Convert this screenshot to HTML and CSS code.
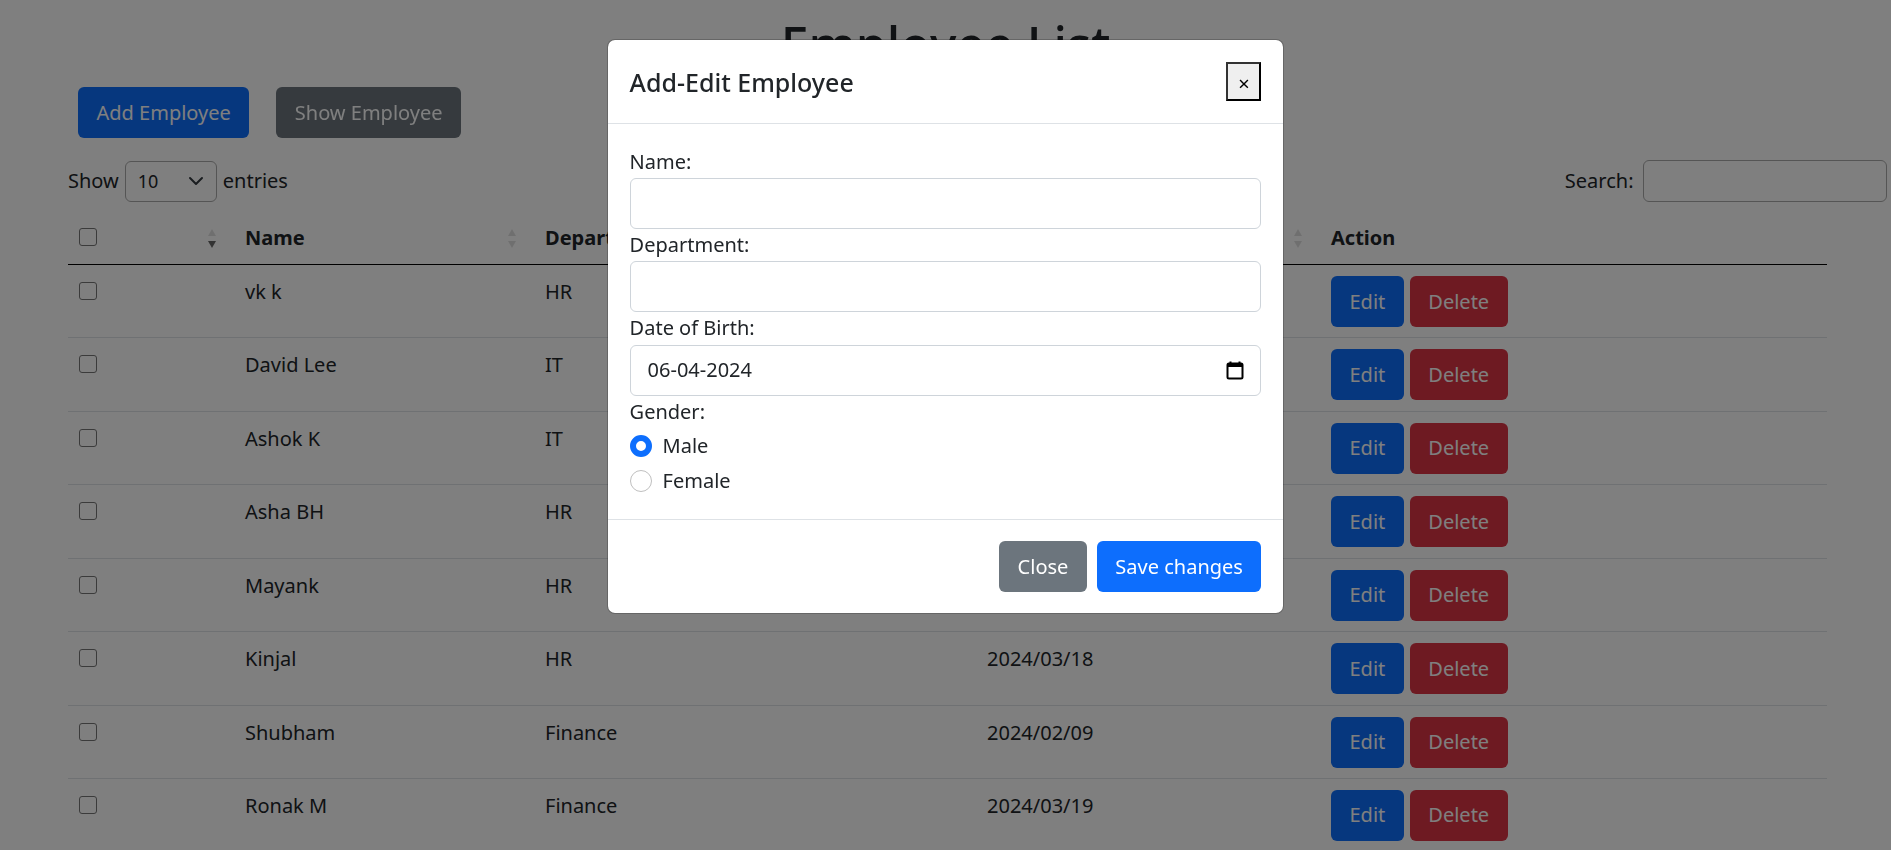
FILE: index.html
```html
<!DOCTYPE html>
<html lang="en">
<head>
  <meta charset="UTF-8" />
  <title>Employee List</title>
  <link rel="stylesheet" href="styles.css">
</head>
<body>

  <h1 class="page-title">Employee List</h1>

  <div class="top-actions">
    <button class="btn btn-primary">Add Employee</button>
    <button class="btn btn-dark">Show Employee</button>
  </div>

  <div class="table-tools">
    <div class="length-box">
      Show
      <div class="fake-select">
        <span>10</span>
        <svg width="16" height="16" viewBox="0 0 16 16"><path d="M2 5l6 6 6-6" fill="none" stroke="#343a40" stroke-width="2" stroke-linecap="round" stroke-linejoin="round"/></svg>
      </div>
      entries
    </div>
    <label class="search-box">Search: <input type="text" class="search-input" /></label>
  </div>

  <table class="emp-table">
    <colgroup>
      <col class="col-check"><col class="col-name"><col class="col-dept"><col class="col-dob"><col class="col-action">
    </colgroup>
    <thead>
      <tr>
        <th class="sort sort-active"><input type="checkbox" class="check" /></th>
        <th class="sort">Name</th>
        <th class="sort">Department</th>
        <th class="sort">Date of Birth</th>
        <th>Action</th>
      </tr>
    </thead>
    <tbody>
      <tr><td><input type="checkbox" class="check" /></td><td>vk k</td><td>HR</td><td></td><td><button class="btn btn-primary">Edit</button><button class="btn btn-danger">Delete</button></td></tr>
      <tr><td><input type="checkbox" class="check" /></td><td>David Lee</td><td>IT</td><td></td><td><button class="btn btn-primary">Edit</button><button class="btn btn-danger">Delete</button></td></tr>
      <tr><td><input type="checkbox" class="check" /></td><td>Ashok K</td><td>IT</td><td></td><td><button class="btn btn-primary">Edit</button><button class="btn btn-danger">Delete</button></td></tr>
      <tr><td><input type="checkbox" class="check" /></td><td>Asha BH</td><td>HR</td><td></td><td><button class="btn btn-primary">Edit</button><button class="btn btn-danger">Delete</button></td></tr>
      <tr><td><input type="checkbox" class="check" /></td><td>Mayank</td><td>HR</td><td></td><td><button class="btn btn-primary">Edit</button><button class="btn btn-danger">Delete</button></td></tr>
      <tr><td><input type="checkbox" class="check" /></td><td>Kinjal</td><td>HR</td><td>2024/03/18</td><td><button class="btn btn-primary">Edit</button><button class="btn btn-danger">Delete</button></td></tr>
      <tr><td><input type="checkbox" class="check" /></td><td>Shubham</td><td>Finance</td><td>2024/02/09</td><td><button class="btn btn-primary">Edit</button><button class="btn btn-danger">Delete</button></td></tr>
      <tr><td><input type="checkbox" class="check" /></td><td>Ronak M</td><td>Finance</td><td>2024/03/19</td><td><button class="btn btn-primary">Edit</button><button class="btn btn-danger">Delete</button></td></tr>
    </tbody>
  </table>

  <div class="modal-backdrop">
    <div class="modal">
      <div class="modal-header">
        <h2 class="modal-title">Add-Edit Employee</h2>
        <button class="close-x">×</button>
      </div>
      <form class="modal-body">
        <label class="field-label">Name:</label>
        <input type="text" class="form-control" />
        <label class="field-label">Department:</label>
        <input type="text" class="form-control" />
        <label class="field-label">Date of Birth:</label>
        <div class="form-control date-control">
          <input type="text" class="date-text" value="06-04-2024" />
          <svg width="20" height="20" viewBox="0 0 20 20"><path d="M5.5 1.5v3M14.5 1.5v3" stroke="#000" stroke-width="2" fill="none"/><rect x="2.5" y="3.5" width="15" height="15" rx="1.5" fill="none" stroke="#000" stroke-width="2"/><rect x="2.5" y="3.5" width="15" height="3.5" fill="#000"/></svg>
        </div>
        <label class="field-label">Gender:</label>
        <label class="radio-row"><input type="radio" name="gender" class="radio" checked /> Male</label>
        <label class="radio-row"><input type="radio" name="gender" class="radio" /> Female</label>
      </form>
      <div class="modal-footer">
        <button class="btn btn-secondary">Close</button>
        <button class="btn btn-primary">Save changes</button>
      </div>
    </div>
  </div>

</body>
</html>
```

FILE: styles.css
```css
* {
  box-sizing: border-box;
}

html, body {
  height: 100%;
}

body {
  margin: 0;
  overflow: hidden;
  background: #fff;
  color: #212529;
  font-family: "Noto Sans", sans-serif;
  font-size: 20px;
  line-height: 32px;
}

.page-title {
  margin: 0;
  height: 87px;
  padding-top: 14px;
  text-align: center;
  font-size: 50px;
  line-height: 60px;
  font-weight: 500;
}

.top-actions {
  display: flex;
  gap: 27px;
  padding-left: 78px;
}

.btn {
  height: 51px;
  padding: 0 17.5px;
  border: 1px solid transparent;
  border-radius: 6px;
  color: #fff;
  font-family: inherit;
  font-size: 20px;
  line-height: 1;
}

.btn-primary { background: #0d6efd; }
.btn-dark { background: #6c757d; filter: brightness(1); }
.btn-secondary { background: #6c757d; }
.btn-danger { background: #dc3545; margin-left: 6px; }

.top-actions .btn-dark { background: #6c757d; }

.table-tools {
  display: flex;
  justify-content: space-between;
  align-items: center;
  margin-top: 22px;
  padding: 0 4.5px 0 68px;
  height: 42px;
}

.length-box {
  display: flex;
  align-items: center;
  gap: 6px;
}

.fake-select {
  display: flex;
  align-items: center;
  justify-content: space-between;
  width: 92px;
  height: 41px;
  padding: 0 12px;
  border: 1px solid #aaa;
  border-radius: 6px;
  font-size: 18px;
}

.search-box {
  display: flex;
  align-items: center;
  gap: 9px;
}

.search-input {
  width: 244px;
  height: 42px;
  border: 1px solid #aaa;
  border-radius: 6px;
  background: transparent;
}

.emp-table {
  width: 1759px;
  margin: 10px 0 0 68px;
  table-layout: fixed;
  border-collapse: separate;
  border-spacing: 0;
}

.col-check { width: 166px; }
.col-name { width: 300px; }
.col-dept { width: 442px; }
.col-dob { width: 344px; }
.col-action { width: 507px; }

.emp-table th {
  position: relative;
  height: 53px;
  padding: 0 11px;
  border-bottom: 1px solid #000;
  text-align: left;
  font-weight: 700;
  font-size: 20px;
}

.emp-table td {
  height: 73.43px;
  padding: 11px 11px 0;
  border-bottom: 1px solid #dee2e6;
  vertical-align: top;
}

.sort::before,
.sort::after {
  content: "";
  position: absolute;
  right: 18px;
  border-left: 4px solid transparent;
  border-right: 4px solid transparent;
  opacity: 0.125;
}

.sort::before {
  top: 17px;
  border-bottom: 7px solid #000;
}

.sort::after {
  top: 29px;
  border-top: 7px solid #000;
}

.sort-active::after {
  opacity: 0.6;
}

.check {
  appearance: none;
  display: block;
  width: 18px;
  height: 18px;
  margin: 0;
  border: 1.5px solid #767676;
  border-radius: 3px;
  background: #fff;
}

td .check {
  margin-top: 6px;
}

th .check {
  margin-top: -2px;
}

.modal-backdrop {
  position: fixed;
  inset: 0;
  display: flex;
  justify-content: center;
  align-items: flex-start;
  padding-top: 39px;
  background: rgba(0, 0, 0, 0.5);
}

.modal {
  width: 677px;
  background: #fff;
  border: 1px solid rgba(0, 0, 0, 0.2);
  border-radius: 8px;
  background-clip: padding-box;
}

.modal-header {
  display: flex;
  justify-content: space-between;
  align-items: center;
  height: 84px;
  padding: 0 21.6px;
  border-bottom: 1px solid #dee2e6;
}

.modal-title {
  margin: 0;
  font-size: 25px;
  line-height: 32px;
  font-weight: 500;
}

.close-x {
  width: 35px;
  height: 39px;
  padding: 4px 0 0;
  border: 2px solid #000;
  border-top-color: #333;
  border-left-color: #333;
  background: #efefef;
  font-family: inherit;
  font-size: 20px;
  line-height: 1;
  color: #000;
}

.modal-body {
  display: flex;
  flex-direction: column;
  padding: 21.6px 21.6px 21px;
}

.field-label {
  height: 32.4px;
  line-height: 32.4px;
}

.form-control {
  width: 100%;
  height: 51px;
  padding: 0 20px;
  border: 1px solid #ced4da;
  border-radius: 6px;
  background: #fff;
  font-family: inherit;
  font-size: 20px;
  color: #212529;
}

.date-control {
  display: flex;
  align-items: center;
  justify-content: space-between;
  padding-right: 15px;
  padding-left: 17px;
}

.date-text {
  flex: 1;
  min-width: 0;
  padding: 0;
  border: 0;
  outline: 0;
  font: inherit;
  color: inherit;
}

.radio-row {
  display: flex;
  align-items: center;
  gap: 11px;
  height: 35px;
}

.radio {
  appearance: none;
  flex: none;
  width: 22px;
  height: 22px;
  margin: 0;
  border: 1px solid #bfbfbf;
  border-radius: 50%;
  background: #fff;
}

.radio:checked {
  border: 6px solid #0d6efd;
}

.modal-footer {
  display: flex;
  justify-content: flex-end;
  gap: 10px;
  padding: 21px 21.6px;
  border-top: 1px solid #dee2e6;
}
```
